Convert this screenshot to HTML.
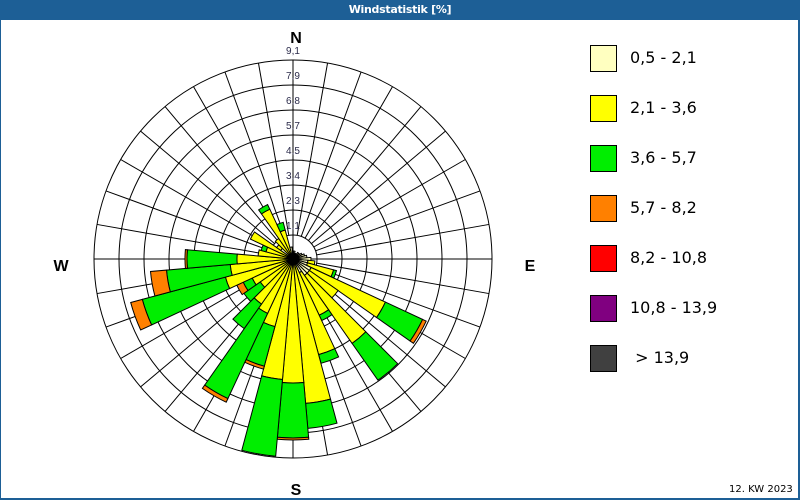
<!DOCTYPE html>
<html><head><meta charset="utf-8"><style>
body{margin:0;width:800px;height:500px;overflow:hidden;background:#fff;font-family:"DejaVu Sans","Liberation Sans",sans-serif}
#f{position:absolute;left:0;top:0;width:797px;height:498px;border:1px solid #1d5f96;border-right-width:2px;border-bottom-width:2px;border-top:none}
#t{position:absolute;left:0;top:0;width:800px;height:20px;background:#1d5f96;color:#fff;font-size:11px;font-weight:bold;text-align:center;line-height:19px;font-family:"DejaVu Sans",sans-serif;letter-spacing:-0.3px}
.lg{position:absolute;left:590px;width:25px;height:25px;border:1px solid #000}
.lt{position:absolute;left:630px;font-size:16px;color:#000}
</style></head><body>
<div id="f"></div>
<div id="t">Windstatistik [%]</div>
<svg id="s" width="800" height="500" style="position:absolute;left:0;top:0"></svg>
<div class="lg" style="top:45px;background:#ffffc0"></div><div class="lt" style="top:48px">0,5 - 2,1</div>
<div class="lg" style="top:95px;background:#ffff00"></div><div class="lt" style="top:98px">2,1 - 3,6</div>
<div class="lg" style="top:145px;background:#00ee00"></div><div class="lt" style="top:148px">3,6 - 5,7</div>
<div class="lg" style="top:195px;background:#ff8000"></div><div class="lt" style="top:198px">5,7 - 8,2</div>
<div class="lg" style="top:245px;background:#ff0000"></div><div class="lt" style="top:248px">8,2 - 10,8</div>
<div class="lg" style="top:295px;background:#800080"></div><div class="lt" style="top:298px">10,8 - 13,9</div>
<div class="lg" style="top:345px;background:#404040"></div><div class="lt" style="top:348px">&nbsp;&gt; 13,9</div>
<div style="position:absolute;left:729px;top:484px;font-size:10px">12. KW 2023</div>
<script>
var s=document.getElementById('s'),cx=293,cy=259,h='';
var P='#ffffc0',Y='#ffff00',G='#00ee00',O='#ff8000';
for(var k=0;k<8;k++){h+='<circle cx="'+cx+'" cy="'+cy+'" r="'+(24+25*k)+'" fill="none" stroke="#000" stroke-width="1"/>';}
for(var a=0;a<360;a+=10){var t=a*Math.PI/180,r0=(a%90==0)?0:24;
h+='<line x1="'+(cx+r0*Math.sin(t))+'" y1="'+(cy-r0*Math.cos(t))+'" x2="'+(cx+199*Math.sin(t))+'" y2="'+(cy-199*Math.cos(t))+'" stroke="#000" stroke-width="1"/>';}
var labs=['1,1','2,3','3,4','4,5','5,7','6,8','7,9','9,1'];
for(var k=0;k<8;k++){h+='<text x="'+cx+'" y="'+(cy-24-25*k-6)+'" font-size="10" text-anchor="middle" fill="#2a2a4a" font-family="Liberation Sans">'+labs[k]+'</text>';}
var D={0:[[8,P]],10:[[8,P]],20:[[6,P]],30:[[6,P]],40:[[8,P]],50:[[8,P]],60:[[10,P]],70:[[12,P]],80:[[14,P]],90:[[18,P]],
100:[[15,P],[22,Y]],110:[[15,P],[42,Y],[45,G]],120:[[20,P],[102,Y],[143,G],[147,O]],130:[[20,P],[55,Y]],
140:[[20,P],[103,Y],[148,G]],150:[[15,P],[62,Y],[68,G]],160:[[99,Y],[108,G]],170:[[145,Y],[170,G]],
180:[[124,Y],[179,G],[181,O]],190:[[121,Y],[198,G]],200:[[70,Y],[111,G],[114,O]],210:[[60,Y],[154,G],[158,O]],
220:[[55,Y],[85,G]],230:[[40,Y],[60,G]],240:[[45,Y],[55,G],[62,O]],250:[[70,Y],[156,G],[168,O]],
260:[[63,Y],[127,G],[143,O]],270:[[56,Y],[106,G],[108,O]],280:[[35,Y]],290:[[28,Y],[33,G]],300:[[47,Y]],
310:[[15,P],[20,Y]],320:[[25,Y]],330:[[55,Y],[60,G]],340:[[30,Y],[38,G]],350:[[12,P]]};
function pt(r,d){var t=d*Math.PI/180;return (cx+r*Math.sin(t)).toFixed(1)+','+(cy-r*Math.cos(t)).toFixed(1);}
for(var a in D){a=+a;var ps=D[a],rp=0;ps.forEach(function(q){var r=q[0];
h+='<path d="M'+pt(rp,a-5)+' L'+pt(r,a-5)+' A'+r+' '+r+' 0 0 1 '+pt(r,a+5)+' L'+pt(rp,a+5)+(rp>0?' A'+rp+' '+rp+' 0 0 0 '+pt(rp,a-5):'')+'Z" fill="'+q[1]+'" stroke="#000" stroke-width="1"/>';rp=r;});}
h+='<text x="296" y="43" font-size="16" font-weight="bold" text-anchor="middle" font-family="Liberation Sans">N</text>';
h+='<text x="296" y="495" font-size="16" font-weight="bold" text-anchor="middle" font-family="Liberation Sans">S</text>';
h+='<text x="61" y="271" font-size="16" font-weight="bold" text-anchor="middle" font-family="Liberation Sans">W</text>';
h+='<text x="530" y="271" font-size="16" font-weight="bold" text-anchor="middle" font-family="Liberation Sans">E</text>';
s.innerHTML=h;
</script>
</body></html>
